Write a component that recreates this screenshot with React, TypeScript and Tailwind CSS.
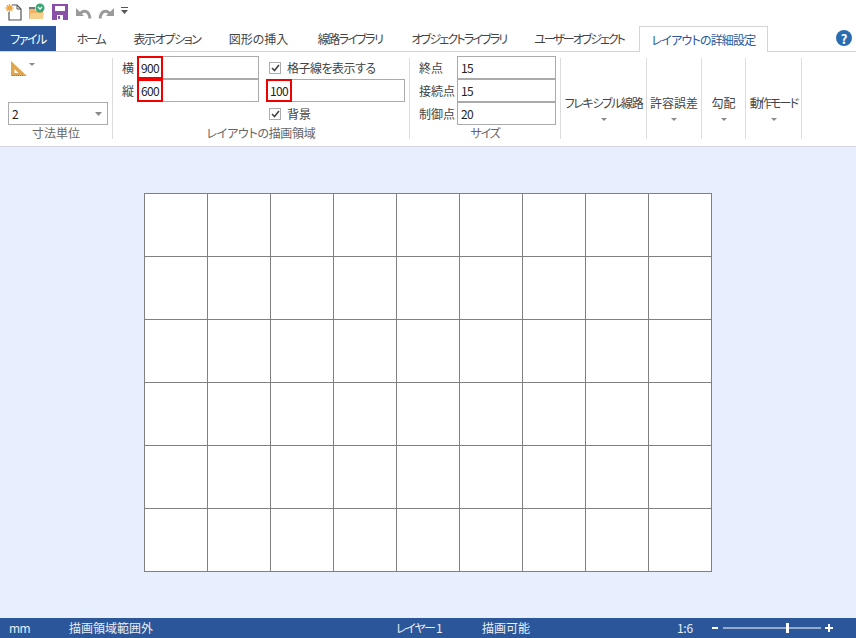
function Caret({ className = '', w = 7 }: { className?: string; w?: number }) {
  return (
    <svg width={w} height={w > 6 ? 4 : 3} viewBox="0 0 7 4" preserveAspectRatio="none" className={className}>
      <path d="M0 0h7L3.5 4z" fill="#8a8a8a" />
    </svg>
  );
}

function Check({ label, track = '' }: { label: string; track?: string }) {
  return (
    <div className="flex items-center h-[23px] shrink-0 pl-[3px] gap-[6px]">
      <div className="w-[12px] h-[12px] border border-[#ababab] bg-white flex items-center justify-center">
        <svg width="9" height="8" viewBox="0 0 9 8">
          <path d="M1 4l2.5 2.5L8 1" fill="none" stroke="#444" strokeWidth="1.6" />
        </svg>
      </div>
      <span className={`text-[12px] text-[#444] ${track}`}>{label}</span>
    </div>
  );
}

function Input({ value, red, w }: { value: string; red?: boolean; w: string }) {
  return (
    <div className={`${w} h-[23px] border border-[#ababab] bg-white flex items-center relative`}>
      <span className="text-[12px] tracking-[-0.6px] text-[#222] pl-[3px] leading-none">{value}</span>
      {red && <div className="absolute left-[-1px] top-[-1px] w-[26px] h-[23px] border-2 border-[#f00000]" />}
    </div>
  );
}

function DropBtn({ label, w, track = '' }: { label: string; w: string; track?: string }) {
  return (
    <div className={`${w} h-[81px] border-r border-[#dcdcdc] flex flex-col items-center pt-[37px]`}>
      <span className={`text-[12px] leading-[16px] text-[#444] whitespace-nowrap ${track}`}>{label}</span>
      <Caret w={6} className="mt-[7px]" />
    </div>
  );
}

const tabs: [string, string, string][] = [
  ['ホーム', 'w-[69px]', 'tracking-[-2.2px]'],
  ['表示オプション', 'w-[84px]', 'tracking-[-1.4px]'],
  ['図形の挿入', 'w-[99px]', ''],
  ['線路ライブラリ', 'w-[84px]', 'tracking-[-1.6px]'],
  ['オブジェクトライブラリ', 'w-[134px]', 'tracking-[-1.8px]'],
  ['ユーザーオブジェクト', 'w-[106px]', 'tracking-[-2px]'],
];

export default function App() {
  return (
    <div className='[font-family:"Noto_Sans_CJK_JP","Noto_Sans",sans-serif] [font-feature-settings:"palt"] w-[856px] h-[638px] flex flex-col bg-white overflow-hidden'>
      {/* quick access */}
      <div className="h-[26px] flex items-start pt-[3px] pl-[5px] gap-[6px]">
        <svg width="17" height="18" viewBox="0 0 17 18">
          <path d="M7 2h5l4 4v11H4V9" fill="#fff" stroke="#555" strokeWidth="1.2" />
          <path d="M12 2v4h4" fill="none" stroke="#555" />
          <g stroke="#f0a53a" strokeWidth="1.4">
            <path d="M4.5 1v8M.5 5h8M1.7 2.200l5.600 5.600M7.300 2.200L1.700 7.800" />
          </g>
        </svg>
        <svg width="18" height="18" viewBox="0 0 18 18">
          <path d="M1 4h6v4H1z" fill="#777" />
          <path d="M1 6h6l1 2h7v8H1z" fill="#efb45f" />
          <path d="M1 16l2-6h13l-1 6z" fill="#f6cf8d" />
          <circle cx="12" cy="5" r="4.500" fill="#3ba678" />
          <path d="M10 4l2 2 2-2" fill="none" stroke="#fff" strokeWidth="1.300" />
        </svg>
        <svg width="16" height="16" viewBox="0 0 16 16" className="mt-[1px]">
          <path d="M0 0h16v16H0z" fill="#8a4fa8" />
          <path d="M3 2h10v5H3z" fill="#fff" />
          <path d="M5 11h6v5H5z" fill="#fff" />
          <path d="M6 12h2v3H6z" fill="#8a4fa8" />
        </svg>
        <svg width="17" height="13" viewBox="0 0 17 13" className="ml-[1px] mt-[3px]">
          <path d="M5 8C8 3.500 14 4 15 12.500" fill="none" stroke="#9a9a9a" strokeWidth="3" />
          <path d="M1 2v8h8z" fill="#9a9a9a" />
        </svg>
        <svg width="17" height="13" viewBox="0 0 17 13" className="mt-[3px]">
          <path d="M12 8C9 3.500 3 4 2 12.500" fill="none" stroke="#9a9a9a" strokeWidth="3" />
          <path d="M16 2v8H8z" fill="#9a9a9a" />
        </svg>
        <svg width="7" height="8" viewBox="0 0 7 8" className="mt-[4px]">
          <path d="M0 0h7v1H0zM0 3h7L3.500 7z" fill="#555" />
        </svg>
      </div>

      {/* tabs */}
      <div className="h-[26px] flex border-b border-[#d4d4d4]">
        <div className="w-[56px] h-[25px] pt-px bg-[#2b579a] text-white text-[12px] tracking-[-1.5px] flex items-center justify-center">ファイル</div>
        {tabs.map(([t, w, tr]) => (
          <div key={t} className={`${w} ${tr} h-[25px] pt-px flex items-center justify-center text-[12px] text-[#444] whitespace-nowrap`}>
            {t}
          </div>
        ))}
        <div className="w-[129px] ml-[7px] h-[26px] pt-px border border-b-0 border-[#d4d4d4] bg-white flex items-center justify-center text-[12px] tracking-[-0.8px] text-[#2b579a] whitespace-nowrap">
          レイアウトの詳細設定
        </div>
        <div className="ml-auto mr-[4px] mt-[4px] w-[16px] h-[16px] rounded-full bg-[#2b6cb0] text-white text-[13px] font-bold flex items-center justify-center leading-none">
          ?
        </div>
      </div>

      {/* ribbon */}
      <div className="h-[95px] border-b border-[#d6d6e0] flex pt-[6px]">
        {/* group 1 */}
        <div className="w-[113px] h-[81px] border-r border-[#dcdcdc] flex flex-col shrink-0">
          <div className="flex items-start pl-[11px] pt-[3px] h-[44px] shrink-0 gap-[2px]">
            <svg width="16" height="15" viewBox="0 0 16 15">
              <path d="M0 0l16 15H0z" fill="#e0a64e" />
              <path d="M3.500 8l4 4h-4z" fill="#fff" />
              <path d="M1 14.500h12" stroke="#a87a30" strokeDasharray="1 1" />
            </svg>
            <Caret w={6} className="mt-[2px]" />
          </div>
          <div className="ml-[8px] w-[100px] h-[23px] shrink-0 border border-[#ababab] flex items-center justify-between px-[3px]">
            <span className="text-[12px] text-[#222] leading-none">2</span>
            <Caret className="mr-[2px]" />
          </div>
          <div className="text-center text-[12px] text-[#666] leading-[16px] shrink-0">寸法単位</div>
        </div>

        {/* group 2 */}
        <div className="w-[297px] h-[81px] border-r border-[#dcdcdc] shrink-0 flex flex-col">
          <div className="flex h-[69px] shrink-0 -mt-[2px]">
            <div className="w-[153px] flex flex-col pl-[9px]">
              {[['横', '900'], ['縦', '600']].map(([l, v]) => (
                <div key={l} className="flex items-center h-[23px] shrink-0">
                  <span className="w-[15px] text-[12px] text-[#444] leading-none">{l}</span>
                  <Input value={v} red w="w-[122px]" />
                </div>
              ))}
            </div>
            <div className="flex flex-col">
              <Check label="格子線を表示する" track="tracking-[-0.5px]" />
              <div className="h-[23px] shrink-0">
                <Input value="100" red w="w-[139px]" />
              </div>
              <Check label="背景" />
            </div>
          </div>
          <div className="text-center text-[12px] text-[#666] leading-[16px] tracking-[-0.3px] shrink-0">レイアウトの描画領域</div>
        </div>

        {/* group 3 */}
        <div className="w-[151px] h-[81px] border-r border-[#dcdcdc] shrink-0 flex flex-col">
          <div className="h-[69px] shrink-0 -mt-[2px] flex flex-col pl-[9px]">
            {[['終点', '15'], ['接続点', '15'], ['制御点', '20']].map(([l, v]) => (
              <div key={l} className="flex items-center h-[23px] shrink-0">
                <span className="w-[38px] text-[12px] text-[#444] leading-none whitespace-nowrap">{l}</span>
                <Input value={v} w="w-[99px]" />
              </div>
            ))}
          </div>
          <div className="text-center text-[12px] text-[#666] leading-[16px] tracking-[-1.3px] shrink-0">サイズ</div>
        </div>

        <DropBtn label="フレキシブル線路" w="w-[86px]" track="tracking-[-1.4px]" />
        <DropBtn label="許容誤差" w="w-[55px]" />
        <DropBtn label="勾配" w="w-[44px]" />
        <DropBtn label="動作モード" w="w-[56px]" track="tracking-[-1.8px]" />
      </div>

      {/* canvas */}
      <div className="flex-1 bg-[#e7eefe] flex items-center justify-center">
        <div className="w-[568px] h-[379px] bg-white border-t border-l border-[#808080] grid grid-cols-[repeat(9,63px)] grid-rows-[repeat(6,63px)]">
          {Array.from({ length: 54 }).map((_, i) => (
            <div key={i} className="border-r border-b border-[#808080]" />
          ))}
        </div>
      </div>

      {/* status bar */}
      <div className="h-[20px] bg-[#2b579a] text-[#e8eef8] text-[12px] flex items-center leading-none">
        <span className="ml-[9px] w-[60px] tracking-[-0.5px]">mm</span>
        <span className="w-[327px]">描画領域範囲外</span>
        <span className="w-[86px] tracking-[-1.3px]">レイヤー 1</span>
        <span className="w-[195px]">描画可能</span>
        <span className="w-[35px] tracking-[-0.3px]">1:6</span>
        <svg width="125" height="12" viewBox="0 0 125 12" className="shrink-0">
          <path d="M0 5h6v2H0z" fill="#fff" />
          <path d="M11 5.500h98v1H11z" fill="#fff" />
          <path d="M74 1h3v10h-3z" fill="#fff" />
          <path d="M113 5h8v2h-8zM116 2h2v8h-2z" fill="#fff" />
        </svg>
      </div>
    </div>
  );
}
